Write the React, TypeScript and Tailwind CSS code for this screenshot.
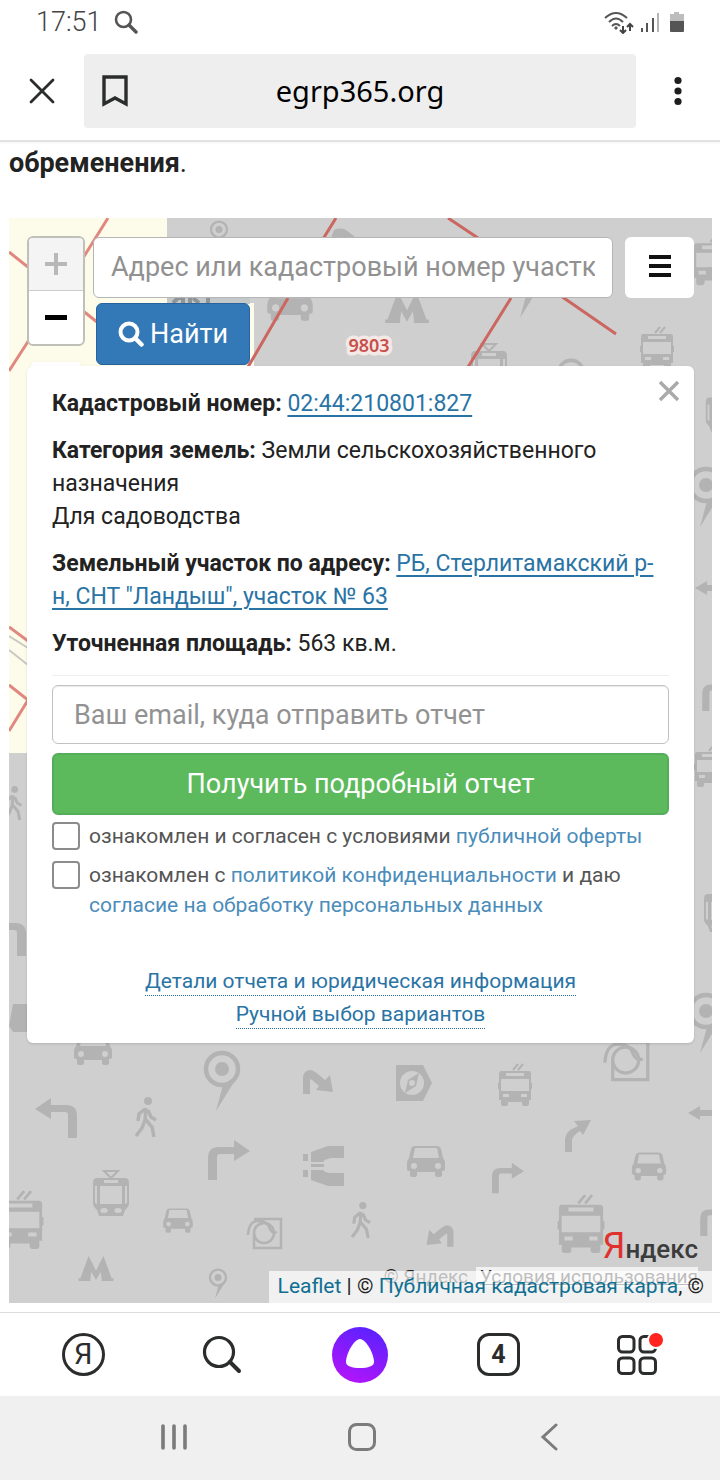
import React from 'react';

type Place = { x: number; y: number; s?: number; flip?: boolean };

function at({ x, y, s = 1, flip = false }: Place) {
  return `translate(${x} ${y}) scale(${flip ? -s : s} ${s})`;
}

/* Map pictograms, each centred on its own origin. */
function Car(p: Place) {
  return (
    <g transform={at(p)}>
      <path
        fillRule="evenodd"
        d="M-11-16H11Q14-16 15-13L17-4Q19-2 19 2V7Q19 9 16 9V13Q16 15 13 15H12Q9 15 9 13V10H-9V13Q-9 15-12 15H-13Q-16 15-16 13V9Q-19 9-19 7V2Q-19-2-17-4L-15-13Q-14-16-11-16ZM-11-14L-13-4H13L11-14ZM-12 1A3 3 0 1 0-12 7A3 3 0 1 0-12 1ZM12 1A3 3 0 1 0 12 7A3 3 0 1 0 12 1Z"
      />
    </g>
  );
}

function Trolley(p: Place) {
  return (
    <g transform={at(p)}>
      <path
        fillRule="evenodd"
        d="M-14-14H14Q16-14 16-11V-2H17V4H16V15H14V19Q14 21 12 21H9Q7 21 7 19V17H-7V19Q-7 21-9 21H-12Q-14 21-14 19V15H-16V4H-17V-2H-16V-11Q-16-14-14-14ZM-9-12V-9H9V-12ZM-14-6V6H14V-6ZM-12 9V12H-6V9ZM6 9V12H12V9Z"
      />
      <path d="M-2-15L3-21M3-15L8-21" stroke="currentColor" strokeWidth="2" fill="none" />
    </g>
  );
}

function Tram(p: Place) {
  return (
    <g transform={at(p)}>
      <path
        fillRule="evenodd"
        d="M-14-16H14Q18-16 18-11V10Q18 12 14 16L12 22H-12L-14 16Q-18 12-18 10V-11Q-18-16-14-16ZM-7-14V-11H7V-14ZM-11-8V10H11V-8ZM-16-8V9L-14 10V-8ZM14-8V10L16 9V-8ZM-7 14A3 2 0 1 0-7 19A3 2 0 1 0-7 14ZM7 14A3 2 0 1 0 7 19A3 2 0 1 0 7 14Z"
      />
      <path d="M-7-23H7L0-16Z" fill="none" stroke="currentColor" strokeWidth="2" />
    </g>
  );
}

function Metro(p: Place) {
  return (
    <g transform={at(p)}>
      <path d="M-8-14L0 2L8-14L17 10H19V13H6V10L5 3L0 12L-5 3L-6 10V13H-19V10H-17Z" />
    </g>
  );
}

function Pin(p: Place) {
  return (
    <g transform={at(p)}>
      <circle cx="0" cy="-11" r="16" fill="none" stroke="currentColor" strokeWidth="4.500" />
      <circle cx="0" cy="-11" r="7" />
      <path d="M17-6L-6 31L1 5Z" />
    </g>
  );
}

function Walker(p: Place) {
  return (
    <g transform={at(p)}>
      <circle cx="2" cy="-16" r="4" />
      <path
        d="M0-9L-1 4M-1-8L-7-3L-8 4M2-7L5 0L10 3M-1 3L-4 11L-10 19M0 3L6 10L8 20"
        fill="none"
        stroke="currentColor"
        strokeWidth="3.500"
      />
    </g>
  );
}

function Turn(p: Place) {
  return (
    <g transform={at(p)}>
      <path d="M-21 20V-2Q-21-13-10-13H5V-20L21-9L5 1V-6H-9Q-12-6-12-3V20Z" />
    </g>
  );
}

function Compass(p: Place) {
  return (
    <g transform={at(p)}>
      <path fillRule="evenodd" d="M-18-18H9L18 0L9 18H-18ZM-2-12A12 12 0 1 0-2 12A12 12 0 1 0-2-12Z" />
      <path fillRule="evenodd" d="M5-10L2 3L-9 10L-6-3ZM-2-3A3 3 0 1 0-2 3A3 3 0 1 0-2-3Z" />
    </g>
  );
}

function Dial(p: Place) {
  return (
    <g transform={at(p)} fill="none" stroke="currentColor" strokeWidth="2.500">
      <path d="M-11-14H16V15H-11V1M-17 2Q-16-13-6-12Q3-12 5-4Q8 1 12-1" />
      <circle cx="-1" cy="0" r="10" />
    </g>
  );
}

function Magnet(p: Place) {
  return (
    <g transform={at(p)}>
      <path d="M-12-14L5-20H21V-8H8Q2-7 0-4H-12ZM-20-12H-15V-5H-20ZM-12-2H1V1H-12ZM-20 4H-15V11H-20ZM-12 4H0Q2 7 8 7H21V20H5L-12 14Z" />
    </g>
  );
}

function Bent(p: Place) {
  return (
    <g transform={at(p)}>
      <path d="M-15 12V-5Q-14-12-7-12Q-3-11 7-2L12-7L15 10L-2 8L1 4L-6-2Q-8-4-8-1V12Z" />
    </g>
  );
}

function Slant(p: Place) {
  return (
    <g transform={at(p)}>
      <path d="M-13 16V3Q-12-5-4-8L0-10L-4-15L13-16L5-1L2-5Q-5-1-6 4V16Z" />
    </g>
  );
}

function Straight(p: Place) {
  return (
    <g transform={at(p)}>
      <path d="M-12 0L0-7V-3H16V3H0V7Z" />
    </g>
  );
}

function MapLayer() {
  return (
    <svg className="absolute inset-0 h-full w-full" aria-hidden="true">
      <g transform="translate(-9 -218)">
        <path d="M9 218H167V303H254V753H9Z" fill="#fdfceb" />
        <path d="M167 298H250V304H167Z" fill="#c3c8c8" />
        <path d="M173 303L178 298H183V303M190 298V303M193 298L199 303M208 298V303" stroke="#8f9494" strokeWidth="4" fill="none" />
        <g fill="#b3b3b3" color="#b3b3b3">
          <Pin x={219} y={235} s={0.5} />
          <Car x={290} y={303} s={1.2} />
          <path d="M331 238L334 230Q342 226 350 233L356 238Z" />
          <Metro x={407} y={308} s={1.15} />
          <Pin x={526} y={287} />
          <Trolley x={657} y={348} />
          <Tram x={489} y={367} />
          <Pin x={571} y={382} s={0.8} />
          <Trolley x={713} y={260} s={1.2} />
          <Tram x={722} y={412} s={0.9} />
          <Pin x={706} y={496} />
          <Straight x={707} y={588} />
          <Turn x={719} y={695} s={0.8} />
          <Trolley x={711} y={766} />
          <Tram x={722} y={910} />
          <Pin x={706} y={1022} />
          <Walker x={13} y={803} s={0.85} />
          <Turn x={5} y={936} flip />
          <path d="M13 1004H27V1032H13L9 1026Z" />
          <Car x={93} y={1050} />
          <Pin x={222} y={1080} />
          <Bent x={318} y={1082} />
          <Compass x={414} y={1083} />
          <Trolley x={515} y={1085} />
          <Dial x={627} y={1060} s={1.3} />
          <Turn x={56} y={1118} flip />
          <Walker x={146} y={1117} />
          <Turn x={229} y={1160} />
          <Magnet x={323} y={1166} />
          <Car x={426} y={1162} />
          <Turn x={508} y={1178} s={0.76} />
          <Slant x={578} y={1136} />
          <Car x={649} y={1167} s={0.9} />
          <Straight x={700} y={1113} />
          <Tram x={111} y={1194} />
          <Car x={178} y={1221} s={0.78} />
          <Trolley x={20} y={1220} s={1.38} />
          <Dial x={265} y={1233} />
          <Walker x={361} y={1220} s={0.9} />
          <Bent x={440} y={1236} s={0.9} flip />
          <Trolley x={581} y={1224} s={1.38} />
          <Turn x={717} y={1220} s={0.8} />
          <Metro x={96} y={1269} s={0.92} />
          <Pin x={218} y={1283} s={0.5} />
        </g>
        <path d="M9 636L28 648M9 650L28 665" stroke="#c9c9c2" strokeWidth="2" fill="none" />
        <g fill="none" stroke="#e08880" strokeWidth="3">
          <path d="M9 252L97 322M108 218L83 258M29 340L9 371M9 627L28 641M9 685L28 700L9 731" />
        </g>
        <g fill="none" stroke="#cc6660" strokeWidth="3">
          <path d="M336 218L323 239M288 298L248 367M448 218L478 238M561 296L616 334M511 298L468 367" />
        </g>
        <text
          x="369"
          y="352"
          textAnchor="middle"
          className="font-[Noto_Sans,sans-serif] text-[18px] font-semibold"
          fill="#c94f4b"
          stroke="#f3e9e7"
          strokeWidth="7"
          strokeLinejoin="round"
          paintOrder="stroke"
        >
          9803
        </text>
      </g>
    </svg>
  );
}

function StatusBar() {
  return (
    <div className="flex h-11 items-center px-9 text-[#555]">
      <span className="text-[27px] font-light text-[#444]">17:51</span>
      <svg className="ml-3 h-6 w-6" viewBox="0 0 24 24" fill="none" stroke="currentColor" strokeWidth="2.600" strokeLinecap="round" aria-hidden="true">
        <circle cx="9.500" cy="9.500" r="7.500" />
        <path d="M15 15L22 22" strokeWidth="3.400" />
      </svg>
      <svg className="ml-auto h-6 w-20" viewBox="0 0 80 24" aria-hidden="true">
        <g fill="none" stroke="#555" strokeWidth="2">
          <path d="M1 8Q12-2 23 8M5 12Q12 5 19 12M8 16Q12 12 16 16" />
        </g>
        <path d="M12 16L14 18L12 20L10 18Z" fill="#555" />
        <path d="M19 16V23M16 20L19 23L22 20M26 21V14M23 17L26 14L29 17" fill="none" stroke="#444" strokeWidth="2" />
        <path d="M38 18V22M43 13V22M49 8V22" stroke="#555" strokeWidth="2" />
        <path d="M54 3V22" stroke="#b5b5b5" strokeWidth="2" />
        <path d="M66 4H70V2H75V4H80V12H66Z" fill="#bdbdbd" />
        <path d="M66 11H80V21Q80 22 79 22H67Q66 22 66 21Z" fill="#555" />
      </svg>
    </div>
  );
}

function AddressBar() {
  return (
    <header className="relative z-10 flex h-[98px] items-center border-b-2 border-[#e2e2e2] bg-white pb-[2px] shadow-xs">
      <button type="button" aria-label="Закрыть" className="flex w-21 justify-center">
        <svg className="h-[26px] w-[26px]" viewBox="0 0 26 26" fill="none" stroke="#2b2d2c" strokeWidth="2.800" strokeLinecap="round">
          <path d="M2 2L24 24M24 2L2 24" />
        </svg>
      </button>
      <div className="relative flex h-[74px] flex-1 items-center justify-center rounded bg-[#eee]">
        <button type="button" aria-label="Закладка" className="absolute left-[18px]">
          <svg className="h-8 w-7" viewBox="0 0 28 32" fill="none" stroke="#2b2d2c" strokeWidth="3.400">
            <path d="M2 2H24V29L13 23L2 29Z" />
          </svg>
        </button>
        <span className="font-[Noto_Sans,sans-serif] text-[29px] text-black">egrp365.org</span>
      </div>
      <button type="button" aria-label="Меню браузера" className="flex w-21 justify-center">
        <svg className="h-8 w-2" viewBox="0 0 8 32" fill="#1e1e1e">
          <circle cx="4" cy="5.500" r="3.600" />
          <circle cx="4" cy="16" r="3.600" />
          <circle cx="4" cy="26.500" r="3.600" />
        </svg>
      </button>
    </header>
  );
}

function MapControls() {
  return (
    <div className="flex h-[130px] items-start gap-2">
      <div className="flex w-[58px] flex-col gap-4">
        <div className="overflow-hidden rounded-md border-2 border-[#bfc0b8] bg-white">
          <button type="button" aria-label="Приблизить" className="flex h-[53px] w-full items-center justify-center border-b border-[#ccc] bg-[#f4f4f4]">
            <svg className="h-[22px] w-[22px]" viewBox="0 0 22 22" fill="#b8b8b8"><path d="M9 0H13V9H22V13H13V22H9V13H0V9H9Z" /></svg>
          </button>
          <button type="button" aria-label="Отдалить" className="flex h-[53px] w-full items-center justify-center">
            <svg className="h-[5px] w-[22px]" viewBox="0 0 22 5"><path d="M0 0H22V5H0Z" /></svg>
          </button>
        </div>
        <div className="mx-1 h-2 rounded-t bg-white shadow" />
      </div>
      <form className="flex min-w-0 flex-1 flex-col items-start gap-[5px]" onSubmit={(e) => e.preventDefault()}>
        <div className="flex w-full gap-3 pt-px">
          <input
            type="text"
            aria-label="Адрес или кадастровый номер"
            placeholder="Адрес или кадастровый номер участк"
            className="h-[61px] min-w-0 flex-1 rounded-md border border-[#b5b5b5] bg-white px-[17px] pb-px text-[27px] placeholder:text-[#919191]"
          />
          <button type="button" aria-label="Меню" className="flex h-[61px] w-[69px] items-center justify-center rounded-md bg-white">
            <svg className="mb-1 h-6 w-6" viewBox="0 0 24 24"><path d="M1 1H23V5H1ZM1 10H23V14H1ZM1 19H23V23H1Z" fill="#111" /></svg>
          </button>
        </div>
        <button type="submit" className="ml-[3px] flex h-[62px] w-[154px] items-center justify-center gap-[6px] rounded-md border border-[#2863a0] bg-[#3379b8] text-[27px] text-white">
          <svg className="h-[26px] w-[26px]" viewBox="0 0 26 26" fill="none" stroke="currentColor" strokeWidth="4" strokeLinecap="round" aria-hidden="true">
            <circle cx="11" cy="11" r="8.500" />
            <path d="M17.500 17.500L23.500 23.500" strokeWidth="4.500" />
          </svg>
          Найти
        </button>
      </form>
    </div>
  );
}

const link = 'text-[#2a74a5] underline underline-offset-4 decoration-2';
const softLink = 'text-[#4b8cba]';

function ParcelCard() {
  return (
    <section className="relative rounded-md bg-white px-[25px] pt-[21px] pb-[14px] text-[23px] leading-[33px] text-[#222] shadow-sm">
      <button type="button" aria-label="Закрыть карточку" className="absolute top-[14px] right-[14px]">
        <svg className="h-[22px] w-[22px]" viewBox="0 0 22 22" stroke="#aaa" strokeWidth="3.500"><path d="M2 2L20 20M20 2L2 20" /></svg>
      </button>
      <div className="flex flex-col gap-[14px]">
        <p><b>Кадастровый номер:</b> <a href="#parcel" className={link}>02:44:210801:827</a></p>
        <p><b>Категория земель:</b> Земли сельскохозяйственного назначения<br />Для садоводства</p>
        <p><b>Земельный участок по адресу:</b> <a href="#address" className={link}>РБ, Стерлитамакский р-<wbr />н, СНТ "Ландыш", участок № 63</a></p>
        <p><b>Уточненная площадь:</b> 563 кв.м.</p>
      </div>
      <form onSubmit={(e) => e.preventDefault()}>
        <div className="mt-[15px] border-t border-[#eee] pt-[9px]">
          <input
            type="email"
            aria-label="Ваш email"
            placeholder="Ваш email, куда отправить отчет"
            className="h-[59px] w-full rounded-md border border-[#c2c2c2] px-[21px] text-[27px] shadow-[inset_0_1px_1px_rgba(0,0,0,0.08)] placeholder:text-[#929292]"
          />
        </div>
        <button type="submit" className="mt-[9px] h-[62px] w-full rounded-md border-2 border-[#55ad5c] bg-[#5cb95c] text-[27px] text-white">
          Получить подробный отчет
        </button>
        <div className="mt-[6px] flex flex-col gap-[9px] text-[21px] leading-[30px] text-[#555]">
          <label className="flex gap-[9px]">
            <input type="checkbox" className="mt-px h-7 w-7 shrink-0 appearance-none rounded border-2 border-[#8c8c8c] bg-white checked:bg-[#3379b8]" />
            <span>ознакомлен и согласен с условиями <a href="#offer" className={softLink}>публичной оферты</a></span>
          </label>
          <label className="flex gap-[9px]">
            <input type="checkbox" className="mt-px h-7 w-7 shrink-0 appearance-none rounded border-2 border-[#8c8c8c] bg-white checked:bg-[#3379b8]" />
            <span>ознакомлен с <a href="#privacy" className={softLink}>политикой конфиденциальности</a> и даю<br /><a href="#consent" className={softLink}>согласие на обработку персональных данных</a></span>
          </label>
        </div>
      </form>
      <div className="mt-[47px] flex flex-col items-center gap-1 text-[21px] leading-7 text-[#2a74a5]">
        <a href="#details" className="border-b border-dotted border-[#2a74a5]">Детали отчета и юридическая информация</a>
        <a href="#manual" className="border-b border-dotted border-[#2a74a5]">Ручной выбор вариантов</a>
      </div>
    </section>
  );
}

function Attribution() {
  return (
    <div className="absolute right-0 bottom-0 whitespace-nowrap">
      <div className="absolute right-[14px] bottom-4 flex flex-col items-end">
        <span className="text-[36px] leading-9 text-[#3c3c3c]">
          <span className="text-[#e0322d]">Я</span><span className="text-[26px] font-medium">ндекс</span>
        </span>
        <div className="flex gap-2 text-[19px] leading-5 text-[#222]">
          <span>© Яндекс</span>
          <a href="#terms" className="bg-white/70 pl-1 underline">Условия использования</a>
        </div>
      </div>
      <div className="relative h-8 bg-white/70 pr-2 pl-[9px] text-[21px] leading-[30px] text-[#222]">
        <a href="#leaflet" className="text-[#0f6f92]">Leaflet</a> | © <a href="#cadastre" className="text-[#0f6f92]">Публичная кадастровая карта</a>, ©
      </div>
    </div>
  );
}

function BrowserNav() {
  return (
    <nav className="relative z-10 grid h-[84px] grid-cols-5 place-items-center border-t border-[#dcdcdc] bg-white px-[14px] text-[#2b2d2c]">
      <button type="button" aria-label="Яндекс" className="flex h-[43px] w-[43px] items-center justify-center rounded-full border-[3px] border-current text-[29px] leading-none">Я</button>
      <button type="button" aria-label="Поиск">
        <svg className="h-10 w-10" viewBox="0 0 40 40" fill="none" stroke="currentColor" strokeWidth="3.200" strokeLinecap="round">
          <circle cx="17" cy="17" r="14.500" />
          <path d="M28 27L37 36" strokeWidth="4" />
        </svg>
      </button>
      <button type="button" aria-label="Алиса">
        <svg className="h-14 w-14" viewBox="0 0 56 56">
          <defs>
            <linearGradient id="alice" x1="0.700" y1="0" x2="0.300" y2="1">
              <stop offset="0" stopColor="#5a22ff" />
              <stop offset="1" stopColor="#b414fa" />
            </linearGradient>
          </defs>
          <circle cx="28" cy="28" r="28" fill="url(#alice)" />
          <path d="M28 12C34 12 42 27 42 35C42 39 36 41 28 41S14 39 14 35C14 27 22 12 28 12Z" fill="#fff" />
        </svg>
      </button>
      <button type="button" aria-label="Вкладки" className="flex h-[43px] w-[43px] items-center justify-center rounded-xl border-[3px] border-current text-[25px] font-bold">4</button>
      <button type="button" aria-label="Сервисы" className="relative">
        <svg className="h-10 w-10" viewBox="0 0 40 40" fill="none" stroke="currentColor" strokeWidth="3">
          <rect x="1.500" y="1.500" width="15.500" height="15.500" rx="4" />
          <rect x="23" y="1.500" width="15.500" height="15.500" rx="4" />
          <rect x="1.500" y="23" width="15.500" height="15.500" rx="4" />
          <rect x="23" y="23" width="15.500" height="15.500" rx="4" />
        </svg>
        <span className="absolute -top-1 -right-2 h-[18px] w-[18px] rounded-full border-2 border-white bg-[#ff2420]" />
      </button>
    </nav>
  );
}

function SystemNav() {
  return (
    <nav className="flex h-[84px] items-center justify-center gap-[160px] bg-[#f0f0f0] pb-[2px] pl-[3px] text-[#7b7b7b]">
      <button type="button" aria-label="Недавние">
        <svg className="h-7 w-7" viewBox="0 0 28 28" fill="none" stroke="currentColor" strokeWidth="3.600" strokeLinecap="round"><path d="M3 3V25M14 3V25M25 3V25" /></svg>
      </button>
      <button type="button" aria-label="Домой">
        <svg className="h-7 w-7" viewBox="0 0 28 28" fill="none" stroke="currentColor" strokeWidth="3"><rect x="1.500" y="1.500" width="25" height="25" rx="7" /></svg>
      </button>
      <button type="button" aria-label="Назад">
        <svg className="h-7 w-7" viewBox="0 0 28 28" fill="none" stroke="currentColor" strokeWidth="3" strokeLinecap="round"><path d="M20 2L7 14L20 26" /></svg>
      </button>
    </nav>
  );
}

export default function App() {
  return (
    <div className="flex min-h-screen flex-col bg-white font-[Roboto,sans-serif]">
      <StatusBar />
      <AddressBar />
      <main className="flex flex-col px-[9px] pr-2 pb-[9px]">
        <p className="pt-[2px] text-[27px] leading-[38px] text-[#222]"><b>обременения</b>.</p>
        <div className="relative mt-9 min-h-[1085px] overflow-hidden bg-[#cfcfcf] px-[18px] pt-[18px] pb-[250px]">
          <MapLayer />
          <div className="relative">
            <MapControls />
            <ParcelCard />
          </div>
          <Attribution />
        </div>
      </main>
      <BrowserNav />
      <SystemNav />
    </div>
  );
}
